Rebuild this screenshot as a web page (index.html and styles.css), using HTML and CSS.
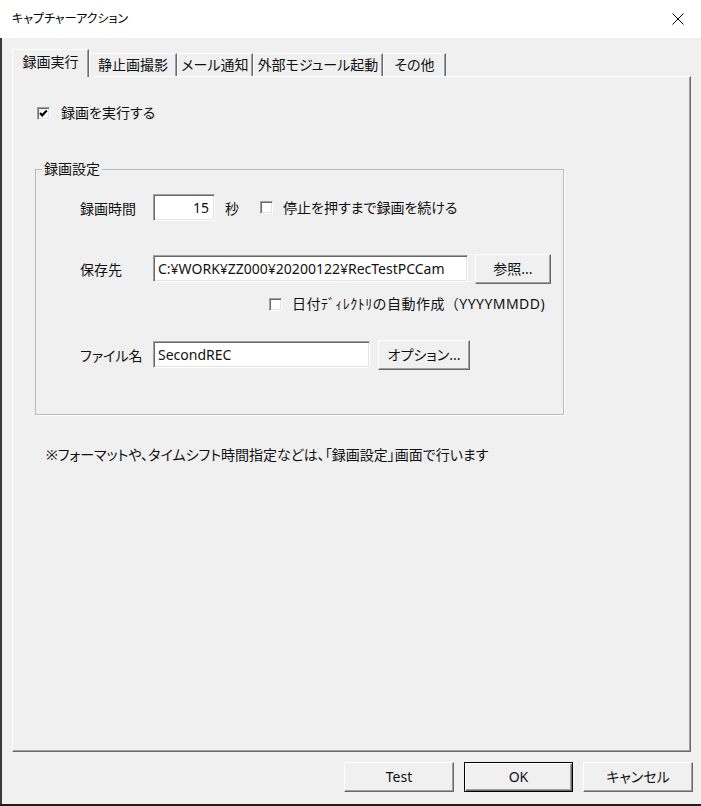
FILE: index.html
```html
<!DOCTYPE html>
<html lang="ja">
<head>
<meta charset="utf-8">
<title>キャプチャーアクション</title>
<link rel="stylesheet" href="styles.css">
</head>
<body>
<div class="window">
  <div class="titlebar">
    <span class="title">キャプチャーアクション</span>
    <span class="close" aria-label="閉じる">
      <svg width="12" height="12" viewBox="0 0 12 12"><path d="M0.5 0.5 L11.5 11.5 M11.5 0.5 L0.5 11.5" stroke="#000" stroke-width="1" fill="none"/></svg>
    </span>
  </div>
  <div class="body">
    <div class="tabs">
      <div class="tab tab-rec active">録画実行</div>
      <div class="tab tab-still">静止画撮影</div>
      <div class="tab tab-mail">メール通知</div>
      <div class="tab tab-ext">外部モジュール起動</div>
      <div class="tab tab-other">その他</div>
    </div>
    <div class="panel">
      <div class="check-row main-check">
        <span class="cb checked"><svg width="11" height="11" viewBox="0 0 11 11"><path d="M2 5 L4.2 7.3 L8.8 2.6" stroke="#000" stroke-width="2.2" fill="none"/></svg></span>
        <span>録画を実行する</span>
      </div>
      <fieldset class="group">
        <legend>録画設定</legend>
        <div class="group-body">
          <div class="row row-time">
            <span class="lbl">録画時間</span>
            <span class="field field-num">15</span>
            <span class="unit">秒</span>
            <span class="cb cb-stop"></span>
            <span>停止を押すまで録画を続ける</span>
          </div>
          <div class="row row-path">
            <span class="lbl">保存先</span>
            <span class="field field-path">C:¥WORK¥ZZ000¥20200122¥RecTestPCCam</span>
            <span class="btn btn-browse">参照...</span>
          </div>
          <div class="check-row sub-check">
            <span class="cb"></span>
            <span class="clip">日付ﾃﾞｨﾚｸﾄﾘの自動作成（YYYYMMDD)</span>
          </div>
          <div class="row row-name">
            <span class="lbl">ファイル名</span>
            <span class="field field-name">SecondREC</span>
            <span class="btn btn-opt">オプション...</span>
          </div>
        </div>
      </fieldset>
      <p class="note">※フォーマットや、タイムシフト時間指定などは、「録画設定」画面で行います</p>
    </div>
    <div class="footer">
      <span class="btn btn-foot">Test</span>
      <span class="btn btn-foot btn-ok">OK</span>
      <span class="btn btn-foot">キャンセル</span>
    </div>
  </div>
</div>
</body>
</html>
```
FILE: styles.css
```css
* { box-sizing: border-box; }
html, body { margin: 0; padding: 0; background: #2a2a2a; }
body {
  font-family: "Noto Sans", "Noto Sans CJK JP", sans-serif;
  font-size: 14px;
  color: #111;
  font-feature-settings: "palt";
}
.window {
  width: 701px;
  height: 806px;
  background: #f0f0f0;
  display: flex;
  flex-direction: column;
  border-bottom: 2px solid #1e1e1e;
}
.titlebar {
  height: 38px;
  flex: none;
  background: #fff;
  display: flex;
  align-items: center;
  justify-content: space-between;
  padding-left: 12px;
}
.title { font-size: 12px; line-height: 20px; color: #000; }
.close {
  width: 46px;
  height: 38px;
  display: flex;
  align-items: center;
  justify-content: center;
}
.body {
  flex: 1;
  display: flex;
  flex-direction: column;
  align-items: flex-start;
  padding: 11px 8px 0 10px;
  border-left: 2px solid #3a3a3a;
}
.tabs {
  display: flex;
  align-items: flex-end;
  height: 27px;
  position: relative;
  z-index: 1;
}
.tab {
  height: 23px;
  display: flex;
  align-items: center;
  justify-content: center;
  line-height: 1;
  background: #f0f0f0;
  border-top: 1px solid #fff;
  border-left: 1px solid #fff;
  border-right: 1px solid #696969;
  box-shadow: inset -1px 0 0 #a0a0a0;
}
.tab.active {
  height: 28px;
  margin-bottom: -1px;
  padding-bottom: 3px;
}
.tab-rec { width: 77px; }
.tab-still { width: 88px; }
.tab-mail { width: 76px; }
.tab-ext { width: 130px; }
.tab-other { width: 63px; }
.panel {
  width: 679px;
  height: 676px;
  border-top: 1px solid #fff;
  border-left: 1px solid #fff;
  border-right: 1px solid #696969;
  border-bottom: 1px solid #696969;
  box-shadow: inset -1px -1px 0 #a0a0a0;
  display: flex;
  flex-direction: column;
  align-items: flex-start;
}
.check-row {
  display: flex;
  align-items: center;
  height: 20px;
  line-height: 20px;
}
.main-check { margin: 26px 0 0 24px; gap: 11px; }
.cb {
  width: 13px;
  height: 13px;
  flex: none;
  background: #fff;
  border: 1px solid;
  border-color: #a0a0a0 #fff #fff #a0a0a0;
  box-shadow: inset 1px 1px 0 #696969, inset -1px -1px 0 #e3e3e3;
  display: flex;
  align-items: center;
  justify-content: center;
}
.cb svg { display: block; }
.group {
  margin: 36px 0 0 22px;
  width: 529px;
  padding: 0;
  border: 1px solid #b9b9b9;
  box-shadow: 1px 1px 0 #fff;
  min-inline-size: 0;
}
.group legend {
  margin-left: 6px;
  padding: 0 2px;
  line-height: 20px;
}
.group-body {
  padding: 0 0 44px 44px;
}
.row {
  display: flex;
  align-items: center;
  height: 31px;
  line-height: 20px;
}
.lbl { width: 73px; flex: none; padding-top: 2px; }
.row-time { margin-top: 13px; }
.row-path { margin-top: 30px; }
.sub-check { margin: 10px 0 0 189px; gap: 10px; }
.row-name { margin-top: 25px; }
.clip {
  width: 255px;
  white-space: nowrap;
  overflow: hidden;
  font-feature-settings: normal;
  letter-spacing: 0.45px;
}
.field {
  height: 27px;
  background: #fff;
  border: 1px solid;
  border-color: #a0a0a0 #fff #fff #a0a0a0;
  box-shadow: inset 1px 1px 0 #696969, inset -1px -1px 0 #e3e3e3;
  padding: 0 4px;
  display: flex;
  align-items: center;
  white-space: nowrap;
  overflow: hidden;
}
.field-num { width: 62px; justify-content: flex-end; padding-right: 5px; }
.field-path { width: 315px; }
.field-name { width: 217px; }
.unit { margin-left: 10px; width: 14px; padding-top: 2px; }
.cb-stop { margin: 0 10px 0 21px; }
.btn {
  height: 30px;
  display: flex;
  align-items: center;
  justify-content: center;
  background: #f0f0f0;
  border: 1px solid;
  border-color: #fff #696969 #696969 #fff;
  box-shadow: inset -1px -1px 0 #a0a0a0;
  line-height: 20px;
  flex: none;
}
.btn-browse { width: 76px; margin-left: 7px; }
.btn-opt { width: 92px; margin-left: 8px; }
.note {
  margin: 30px 0 0 33px;
  line-height: 20px;
}
.footer {
  align-self: stretch;
  display: flex;
  justify-content: flex-end;
  gap: 10px;
  margin-top: 10px;
}
.btn-foot { width: 110px; }
.btn-ok {
  width: 109px;
  border-color: #000;
  box-shadow: inset 1px 1px 0 #fff, inset -1px -1px 0 #696969, inset -2px -2px 0 #a0a0a0;
}
```
